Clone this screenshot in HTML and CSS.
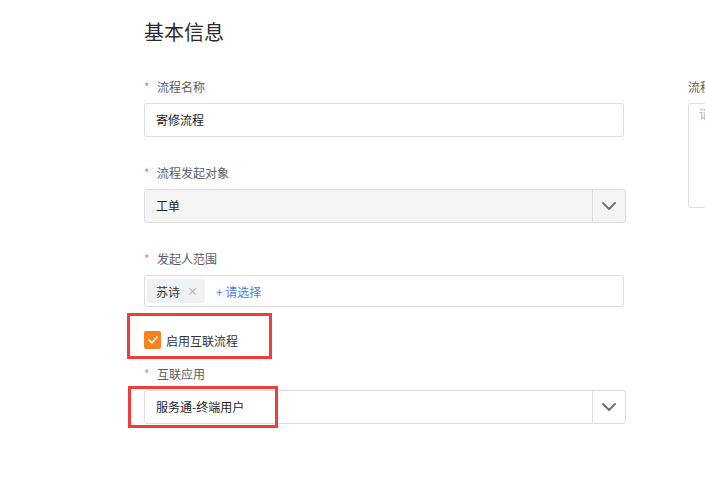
FILE: index.html
```html
<!DOCTYPE html>
<html lang="zh">
<head>
<meta charset="utf-8">
<title>基本信息</title>
<link rel="stylesheet" href="styles.css">
</head>
<body>
<div class="page">
  <h2 class="section-title">基本信息</h2>
  <div class="columns">
    <div class="col-left">
      <div class="form-item">
        <div class="label"><span class="star">*</span>流程名称</div>
        <div class="input">寄修流程</div>
      </div>
      <div class="form-item">
        <div class="label"><span class="star">*</span>流程发起对象</div>
        <div class="select disabled">
          <div class="select-value">工单</div>
          <div class="select-arrow">
            <svg width="14" height="8" viewBox="0 0 14 8"><polyline points="1,1 7,7 13,1" fill="none" stroke="#6b6f78" stroke-width="1.8" stroke-linecap="round" stroke-linejoin="round"/></svg>
          </div>
        </div>
      </div>
      <div class="form-item tight">
        <div class="label"><span class="star">*</span>发起人范围</div>
        <div class="tag-input">
          <span class="tag">苏诗<span class="tag-close">×</span></span>
          <span class="add">+ 请选择</span>
        </div>
      </div>
      <div class="check-row">
        <span class="checkbox">
          <svg width="10" height="8" viewBox="0 0 10 8"><polyline points="1,4 4,6.8 9,1.2" fill="none" stroke="#fff" stroke-width="1.6" stroke-linecap="round" stroke-linejoin="round"/></svg>
        </span>
        <span class="check-text">启用互联流程</span>
        <div class="mark mark-check"></div>
      </div>
      <div class="form-item">
        <div class="label"><span class="star">*</span>互联应用</div>
        <div class="select">
          <div class="select-value">服务通-终端用户</div>
          <div class="select-arrow">
            <svg width="14" height="8" viewBox="0 0 14 8"><polyline points="1,1 7,7 13,1" fill="none" stroke="#6b6f78" stroke-width="1.8" stroke-linecap="round" stroke-linejoin="round"/></svg>
          </div>
          <div class="mark mark-select"></div>
        </div>
      </div>
    </div>
    <div class="col-right">
      <div class="label plain">流程描述</div>
      <div class="textarea">请输入流程描述</div>
    </div>
  </div>
  <h2 class="section-title second">流程设置</h2>
</div>
</body>
</html>
```

FILE: styles.css
```css
html, body {
  margin: 0;
  padding: 0;
  background: #ffffff;
  overflow: hidden;
}
body {
  width: 705px;
  height: 486px;
  font-family: "Noto Sans CJK SC", "Noto Sans", "Liberation Sans", sans-serif;
  color: #333333;
}
.page {
  padding: 16px 0 0 144px;
}
.section-title {
  margin: 0;
  font-size: 20px;
  font-weight: 400;
  line-height: 32px;
  color: #2b2b2b;
}
.section-title.second {
  margin-top: 56px;
}
.columns {
  display: flex;
  margin-top: 30px;
}
.col-left {
  width: 482px;
  flex: none;
}
.col-right {
  margin-left: 62px;
  width: 300px;
  flex: none;
}
.form-item {
  margin-bottom: 27px;
}
.form-item.tight {
  margin-bottom: 24px;
}
.form-item:last-child {
  margin-bottom: 0;
}
.label {
  height: 18px;
  line-height: 18px;
  font-size: 12px;
  color: #5a5c61;
  margin-bottom: 7px;
  white-space: nowrap;
}
.star {
  display: inline-block;
  width: 13px;
  color: #f27a8a;
  font-size: 12px;
}
.input {
  width: 480px;
  height: 34px;
  box-sizing: border-box;
  border: 1px solid #dcdde0;
  border-radius: 3px;
  padding-left: 11px;
  line-height: 32px;
  font-size: 12px;
  color: #222222;
}
.select {
  position: relative;
  display: flex;
  width: 482px;
  height: 34px;
  box-sizing: border-box;
  border: 1px solid #dcdde0;
  border-radius: 3px;
  font-size: 12px;
  color: #222222;
  background: #ffffff;
}
.select.disabled {
  background: #f5f5f5;
}
.select-value {
  flex: 1;
  padding-left: 11px;
  line-height: 32px;
}
.select-arrow {
  width: 32px;
  border-left: 1px solid #dcdde0;
  display: flex;
  align-items: center;
  justify-content: center;
}
.tag-input {
  display: flex;
  align-items: center;
  width: 480px;
  height: 32px;
  box-sizing: border-box;
  border: 1px solid #dcdde0;
  border-radius: 3px;
  padding-left: 2px;
  font-size: 12px;
}
.tag {
  display: inline-flex;
  align-items: center;
  height: 24px;
  padding: 0 7px 0 9px;
  background: #f0f1f4;
  border-radius: 2px;
  color: #333333;
  font-size: 12px;
}
.tag-close {
  margin-left: 7px;
  color: #a3a6ad;
  font-size: 11px;
}
.add {
  margin-left: 11px;
  color: #4b7bf5;
  font-size: 12px;
}
.check-row {
  position: relative;
  display: flex;
  align-items: center;
  height: 18px;
  margin-bottom: 16px;
}
.checkbox {
  width: 17px;
  height: 18px;
  border-radius: 2px;
  background: #f5821f;
  display: flex;
  align-items: center;
  justify-content: center;
  flex: none;
}
.check-text {
  margin-left: 5px;
  font-size: 12px;
  color: #333333;
}
.mark {
  position: absolute;
  border: 3px solid #f23b3b;
  box-sizing: border-box;
  pointer-events: none;
}
.mark-check {
  left: -17px;
  top: -18px;
  width: 145px;
  height: 46px;
}
.mark-select {
  left: -17px;
  top: -5px;
  width: 150px;
  height: 42px;
}
.label.plain {
  padding-left: 0;
}
.textarea {
  height: 105px;
  box-sizing: border-box;
  border: 1px solid #dcdde0;
  border-radius: 3px;
  padding: 1px 10px;
  font-size: 12px;
  line-height: 18px;
  color: #a8abb2;
}
```
